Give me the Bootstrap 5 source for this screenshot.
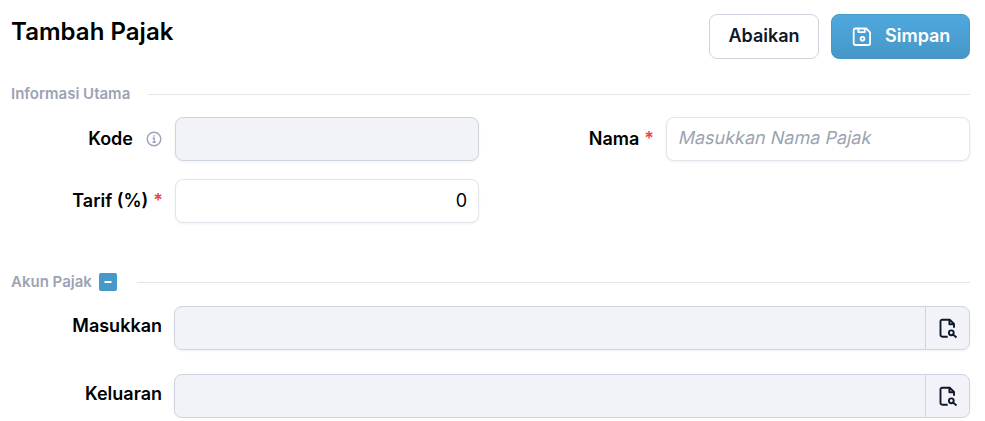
<!DOCTYPE html>
<html lang="id">
<head>
<meta charset="utf-8">
<meta name="viewport" content="width=device-width, initial-scale=1">
<title>Tambah Pajak</title>
<link href="https://cdn.jsdelivr.net/npm/bootstrap@5.3.0/dist/css/bootstrap.min.css" rel="stylesheet">
<style>
body{font-family:Inter,"Liberation Sans",sans-serif;font-size:18px;line-height:28px;color:#000;background:#fff;overflow:hidden}
.page{padding:14px 15px 0 11px}
.page-title{font-size:24px;line-height:36px;font-weight:560;letter-spacing:.04px}
.actions{gap:12px}
.action{height:45px;border-radius:8px;font-size:18px;font-weight:600;line-height:27px;padding:0 18px 2px}
.action-cancel,.action-cancel:hover{width:110px;border:1px solid #d0d3de;color:#0f172a;background:#fff}
.action-save,.action-save:hover{width:139px;padding:0 0 0 19px;border:1px solid #4698c8;color:#fff;background:linear-gradient(#50a8dd,#4697c7)}
.save-text{margin-left:12px;padding-bottom:2px}
.section-title{font-size:15px;line-height:22px;font-weight:600;color:#9ca3b3}
.section-one{margin-top:24px;margin-bottom:12px;gap:18px}
.section-two{margin-top:48px;margin-bottom:13px}
.rule{height:1px;background:#e4e5e8}
.toggle-box{width:18px;height:18px;border-radius:2px;background:#4799c9;border:0;margin:0 20px 0 7.4px}
.halves{column-gap:24px;row-gap:18px;display:grid;grid-template-columns:468px 1fr}
.field-label{font-weight:600;height:44px;padding-right:12px}
.half .field-label{width:164px}
.half .field-label.right-label{width:163px}
.wide .field-label{width:163px;padding-bottom:4px}
.wide-next{margin-top:24px}
.info-icon{margin:0 1px 0 13px}
.star{color:#ef4444;margin-left:5px}
.field.form-control{height:44px;border:1px solid #e3e5ec;border-radius:8px;padding:0 11px 1px 12px;font-size:18px;color:#000;box-shadow:0 1px 3px rgba(15,23,42,.06)}
.field.form-control:disabled{background:#f2f3f8;border-color:#cfd5df}
.hint-text{left:13px;top:7px;color:#9ca3af;transform:skewX(-12deg);pointer-events:none}
.field:not(:placeholder-shown) + .hint-text{display:none}
.lookup{border-radius:8px;box-shadow:0 1px 3px rgba(15,23,42,.06)}
.lookup .field{box-shadow:none}
.lookup-btn,.lookup-btn:hover{width:45px;background:#f2f3f8;border:1px solid #cfd5df;border-radius:8px;color:#0f172a}
</style>
</head>
<body>
<main class="page">
  <header class="d-flex justify-content-between align-items-start">
    <h1 class="page-title mb-0">Tambah Pajak</h1>
    <div class="actions d-flex">
      <button type="button" class="btn action action-cancel">Abaikan</button>
      <button type="button" class="btn action action-save d-flex align-items-center">
        <svg width="22" height="22" viewBox="0 0 22 22" fill="none" stroke="currentColor" stroke-width="1.8" stroke-linejoin="round"><path d="M4.4 2.5h10.8l3.9 3.9v10.9a1.7 1.7 0 0 1-1.7 1.7H4.4a1.7 1.7 0 0 1-1.7-1.7V4.2a1.7 1.7 0 0 1 1.7-1.7zM7.4 2.5v3.6h6.4V2.5"/><circle cx="11.5" cy="12.7" r="1.9"/></svg>
        <span class="save-text">Simpan</span>
      </button>
    </div>
  </header>
  <form>
    <div class="section-one d-flex align-items-center">
      <span class="section-title">Informasi Utama</span><span class="rule flex-grow-1"></span>
    </div>
    <div class="halves">
      <div class="half d-flex">
        <label class="field-label d-flex align-items-center justify-content-end flex-shrink-0" for="kode">Kode
          <svg class="info-icon" width="16" height="16" viewBox="0 0 16 16" fill="none" stroke="#9ca3b8" stroke-width="1.4"><circle cx="8" cy="8" r="6.8"/><path d="M6.6 7.3h1.6v3.9M6.5 11.2h3.3"/><path d="M8 4.3v1.4"/></svg>
        </label>
        <input id="kode" class="form-control field" disabled>
      </div>
      <div class="half d-flex">
        <label class="field-label right-label d-flex align-items-center justify-content-end flex-shrink-0" for="nama">Nama<span class="star">*</span></label>
        <div class="position-relative flex-grow-1">
          <input id="nama" class="form-control field" placeholder=" ">
          <span class="hint-text position-absolute">Masukkan Nama Pajak</span>
        </div>
      </div>
      <div class="half d-flex">
        <label class="field-label d-flex align-items-center justify-content-end flex-shrink-0" for="tarif">Tarif (%)<span class="star">*</span></label>
        <input id="tarif" class="form-control field text-end" value="0">
      </div>
    </div>
    <div class="section-two d-flex align-items-center">
      <span class="section-title">Akun Pajak</span>
      <button type="button" class="toggle-box d-flex align-items-center justify-content-center p-0" aria-label="Tutup"><svg width="8" height="2" viewBox="0 0 8 2"><path d="M0.5 1h7" stroke="#fff" stroke-width="2"/></svg></button>
      <span class="rule flex-grow-1"></span>
    </div>
    <div class="wide d-flex">
      <label class="field-label d-flex align-items-center justify-content-end flex-shrink-0" for="masukkan">Masukkan</label>
      <div class="input-group lookup">
        <input id="masukkan" class="form-control field" disabled>
        <button type="button" class="btn lookup-btn d-flex align-items-center justify-content-center p-0" aria-label="Cari akun"><svg width="22" height="22" viewBox="0 0 22 22" fill="none" stroke="currentColor" stroke-width="1.9" stroke-linejoin="round"><path d="M10.7 19.7H5.2A1.7 1.7 0 0 1 3.5 18V4.4a1.7 1.7 0 0 1 1.7-1.7h7.5l4.3 4.3v3.8M12.4 2.9v4.3h4.5"/><circle cx="14.3" cy="15.8" r="2.4"/><path d="m16.2 17.6 3.3 2.9"/></svg></button>
      </div>
    </div>
    <div class="wide wide-next d-flex">
      <label class="field-label d-flex align-items-center justify-content-end flex-shrink-0" for="keluaran">Keluaran</label>
      <div class="input-group lookup">
        <input id="keluaran" class="form-control field" disabled>
        <button type="button" class="btn lookup-btn d-flex align-items-center justify-content-center p-0" aria-label="Cari akun"><svg width="22" height="22" viewBox="0 0 22 22" fill="none" stroke="currentColor" stroke-width="1.9" stroke-linejoin="round"><path d="M10.7 19.7H5.2A1.7 1.7 0 0 1 3.5 18V4.4a1.7 1.7 0 0 1 1.7-1.7h7.5l4.3 4.3v3.8M12.4 2.9v4.3h4.5"/><circle cx="14.3" cy="15.8" r="2.4"/><path d="m16.2 17.6 3.3 2.9"/></svg></button>
      </div>
    </div>
  </form>
</main>
<script src="https://cdn.jsdelivr.net/npm/bootstrap@5.3.0/dist/js/bootstrap.bundle.min.js"></script>
</body>
</html>
